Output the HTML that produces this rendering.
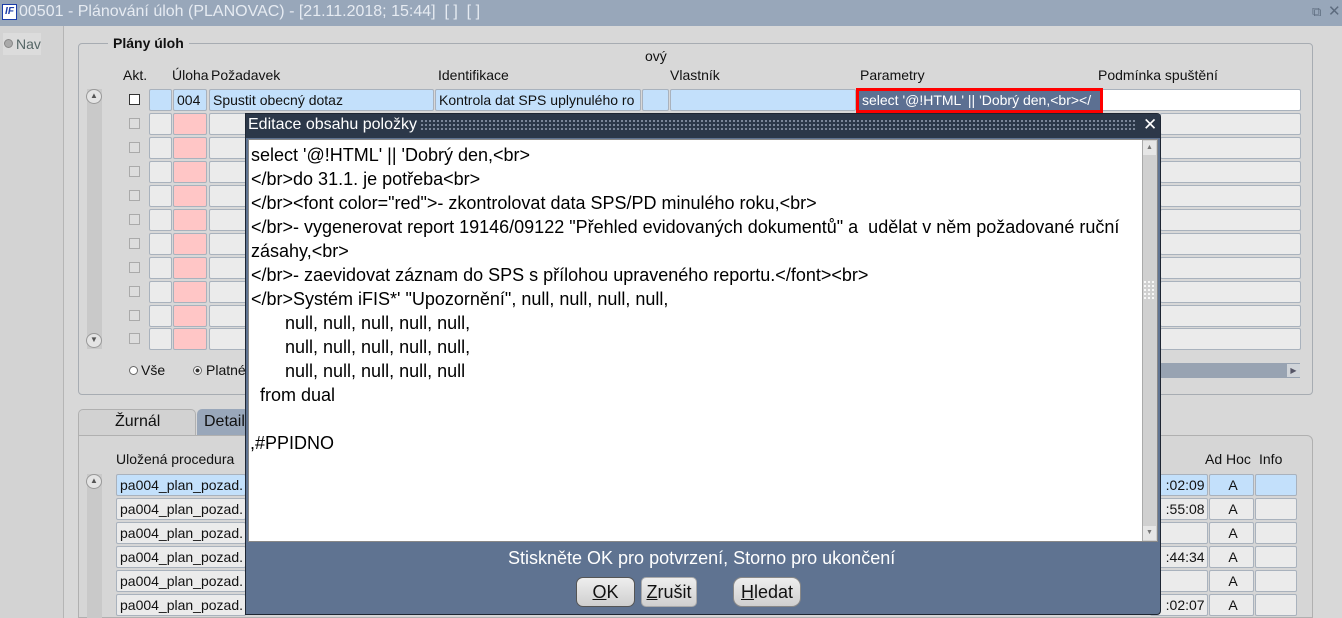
<!DOCTYPE html>
<html><head><meta charset="utf-8">
<style>
*{margin:0;padding:0;box-sizing:border-box}
body{width:1342px;height:618px;overflow:hidden;background:#d8d8d8;font-family:"Liberation Sans",Arial,sans-serif;font-size:14px;color:#111;position:relative}
.a{position:absolute}
.c{position:absolute;height:22px;border:1px solid #a9b2bd;border-radius:2px;background:#ebebeb;font-size:14px;line-height:20px;padding-left:3px;white-space:nowrap;overflow:hidden}
.p{background:#ffc6c6}
.b{background:#c3e0fb}
.cb{position:absolute;width:11px;height:11px;border:1px solid #aaa;background:#ddd}
.t{position:absolute;font-size:14px;white-space:nowrap}
.dl{position:absolute;left:251px;font-size:18px;line-height:20px;white-space:nowrap;color:#000}
.btn{position:absolute;height:30px;border:1px solid #555;border-radius:7px;background:linear-gradient(#eee,#cfcfcf);font-size:18px;line-height:28px;text-align:center}
</style></head><body>
<div class="a" style="left:0;top:0;width:1342px;height:26px;background:#98a7ba"></div>
<div class="a" style="left:2px;top:4px;width:15px;height:16px;background:#fff;border:1px solid #1a3ca8;color:#1a3ca8;font-size:10px;font-weight:bold;font-style:italic;line-height:14px;text-align:center">IF</div>
<div class="t" style="left:19px;top:3px;font-size:16px;color:#e6ebf2">00501 - Plánování úloh (PLANOVAC) - [21.11.2018; 15:44]&nbsp; [ ]&nbsp; [ ]</div>
<div class="t" style="left:1312px;top:4px;font-size:13px;color:#5d6b7e">⧉</div>
<div class="t" style="left:1328px;top:2px;font-size:15px;color:#5d6b7e">✕</div>
<div class="a" style="left:0;top:26px;width:64px;height:592px;background:#d3d3d3;border-right:1px solid #b5b5b5"></div>
<div class="a" style="left:3px;top:33px;width:38px;height:22px;background:#dcdcdc"></div>
<div class="a" style="left:4px;top:39px;width:9px;height:9px;border-radius:50%;background:#aaa;border:1px solid #888"></div>
<div class="t" style="left:16px;top:36px;color:#566">Nav</div>
<div class="a" style="left:78px;top:43px;width:1235px;height:352px;border:1px solid #a7acb2;border-radius:4px"></div>
<div class="t" style="left:108px;top:35px;background:#d8d8d8;padding:0 5px;font-weight:bold">Plány úloh</div>
<div class="t" style="left:645px;top:48px">ový</div>
<div class="t" style="left:123px;top:67px">Akt.</div>
<div class="t" style="left:172px;top:67px">Úloha</div>
<div class="t" style="left:211px;top:67px">Požadavek</div>
<div class="t" style="left:438px;top:67px">Identifikace</div>
<div class="t" style="left:670px;top:67px">Vlastník</div>
<div class="t" style="left:860px;top:67px">Parametry</div>
<div class="t" style="left:1098px;top:67px">Podmínka spuštění</div>
<div class="a" style="left:87px;top:89px;width:15px;height:260px;background:#c9c9c9"></div>
<div class="a" style="left:86px;top:89px;width:16px;height:15px;border:1px solid #999;border-radius:50%;background:#e4e4e4;font-size:8px;text-align:center;line-height:12px;color:#555">▲</div>
<div class="a" style="left:86px;top:333px;width:16px;height:15px;border:1px solid #999;border-radius:50%;background:#e4e4e4;font-size:8px;text-align:center;line-height:12px;color:#555">▼</div>
<div class="cb" style="left:129px;top:94px;background:#fff;border-color:#333"></div>
<div class="c b" style="left:149px;top:89px;width:23px"></div>
<div class="c b" style="left:173px;top:89px;width:34px">004</div>
<div class="c b" style="left:209px;top:89px;width:225px">Spustit obecný dotaz</div>
<div class="c b" style="left:435px;top:89px;width:206px">Kontrola dat SPS uplynulého ro</div>
<div class="c b" style="left:642px;top:89px;width:27px"></div>
<div class="c b" style="left:670px;top:89px;width:186px"></div>
<div class="c" style="left:857px;top:89px;width:444px;background:#fff"></div>
<div class="a" style="left:856px;top:88px;width:247px;height:25px;border:3px solid #f00"></div>
<div class="a" style="left:859px;top:91px;width:241px;height:19px;background:#5c7092;color:#fff;font-size:14px;line-height:19px;padding-left:3px;white-space:nowrap;overflow:hidden">select '@!HTML' || 'Dobrý den,&lt;br&gt;&lt;/</div>
<div class="cb" style="left:129px;top:118px"></div><div class="c" style="left:149px;top:113px;width:23px"></div><div class="c p" style="left:173px;top:113px;width:34px"></div><div class="c" style="left:209px;top:113px;width:225px"></div><div class="c" style="left:1160px;top:113px;width:141px"></div>
<div class="cb" style="left:129px;top:142px"></div><div class="c" style="left:149px;top:137px;width:23px"></div><div class="c p" style="left:173px;top:137px;width:34px"></div><div class="c" style="left:209px;top:137px;width:225px"></div><div class="c" style="left:1160px;top:137px;width:141px"></div>
<div class="cb" style="left:129px;top:166px"></div><div class="c" style="left:149px;top:161px;width:23px"></div><div class="c p" style="left:173px;top:161px;width:34px"></div><div class="c" style="left:209px;top:161px;width:225px"></div><div class="c" style="left:1160px;top:161px;width:141px"></div>
<div class="cb" style="left:129px;top:190px"></div><div class="c" style="left:149px;top:185px;width:23px"></div><div class="c p" style="left:173px;top:185px;width:34px"></div><div class="c" style="left:209px;top:185px;width:225px"></div><div class="c" style="left:1160px;top:185px;width:141px"></div>
<div class="cb" style="left:129px;top:214px"></div><div class="c" style="left:149px;top:209px;width:23px"></div><div class="c p" style="left:173px;top:209px;width:34px"></div><div class="c" style="left:209px;top:209px;width:225px"></div><div class="c" style="left:1160px;top:209px;width:141px"></div>
<div class="cb" style="left:129px;top:238px"></div><div class="c" style="left:149px;top:233px;width:23px"></div><div class="c p" style="left:173px;top:233px;width:34px"></div><div class="c" style="left:209px;top:233px;width:225px"></div><div class="c" style="left:1160px;top:233px;width:141px"></div>
<div class="cb" style="left:129px;top:262px"></div><div class="c" style="left:149px;top:257px;width:23px"></div><div class="c p" style="left:173px;top:257px;width:34px"></div><div class="c" style="left:209px;top:257px;width:225px"></div><div class="c" style="left:1160px;top:257px;width:141px"></div>
<div class="cb" style="left:129px;top:286px"></div><div class="c" style="left:149px;top:281px;width:23px"></div><div class="c p" style="left:173px;top:281px;width:34px"></div><div class="c" style="left:209px;top:281px;width:225px"></div><div class="c" style="left:1160px;top:281px;width:141px"></div>
<div class="cb" style="left:129px;top:310px"></div><div class="c" style="left:149px;top:305px;width:23px"></div><div class="c p" style="left:173px;top:305px;width:34px"></div><div class="c" style="left:209px;top:305px;width:225px"></div><div class="c" style="left:1160px;top:305px;width:141px"></div>
<div class="cb" style="left:129px;top:333px"></div><div class="c" style="left:149px;top:328px;width:23px"></div><div class="c p" style="left:173px;top:328px;width:34px"></div><div class="c" style="left:209px;top:328px;width:225px"></div><div class="c" style="left:1160px;top:328px;width:141px"></div>
<div class="a" style="left:129px;top:366px;width:9px;height:9px;border-radius:50%;border:1px solid #666;background:#fff"></div>
<div class="t" style="left:141px;top:362px">Vše</div>
<div class="a" style="left:193px;top:366px;width:9px;height:9px;border-radius:50%;border:1px solid #666;background:radial-gradient(#333 35%,#fff 45%)"></div>
<div class="t" style="left:206px;top:362px">Platné</div>
<div class="a" style="left:1160px;top:363px;width:140px;height:15px;background:#98a3b2"></div>
<div class="a" style="left:1287px;top:364px;width:13px;height:13px;background:#d0d4d9;font-size:8px;line-height:13px;text-align:center;color:#556">▶</div>
<div class="a" style="left:78px;top:409px;width:118px;height:28px;background:#d2d2d2;border:1px solid #b0b0b0;border-bottom:none;border-radius:5px 5px 0 0"></div>
<div class="t" style="left:115px;top:413px;font-size:16px">Žurnál</div>
<div class="a" style="left:197px;top:409px;width:60px;height:26px;background:#99a7ba;border-radius:5px 5px 0 0"></div>
<div class="t" style="left:204px;top:413px;font-size:16px">Detail</div>
<div class="a" style="left:78px;top:435px;width:1235px;height:183px;background:#d6d6d6;border:1px solid #b0b0b0;border-radius:0 6px 0 0"></div>
<div class="t" style="left:116px;top:451px">Uložená procedura</div>
<div class="t" style="left:1205px;top:451px">Ad Hoc</div>
<div class="t" style="left:1259px;top:451px">Info</div>
<div class="a" style="left:87px;top:474px;width:15px;height:144px;background:#c9c9c9"></div>
<div class="a" style="left:86px;top:474px;width:16px;height:15px;border:1px solid #999;border-radius:50%;background:#e4e4e4;font-size:8px;text-align:center;line-height:12px;color:#555">▲</div>
<div class="c b" style="left:116px;top:474px;width:130px">pa004_plan_pozad.</div><div class="c b" style="left:1150px;top:474px;width:58px">&nbsp;&nbsp;&nbsp;:02:09</div><div class="c b" style="left:1209px;top:474px;width:45px;text-align:center">A</div><div class="c b" style="left:1255px;top:474px;width:42px"></div>
<div class="c" style="left:116px;top:498px;width:130px">pa004_plan_pozad.</div><div class="c" style="left:1150px;top:498px;width:58px">&nbsp;&nbsp;&nbsp;:55:08</div><div class="c" style="left:1209px;top:498px;width:45px;text-align:center">A</div><div class="c" style="left:1255px;top:498px;width:42px"></div>
<div class="c" style="left:116px;top:522px;width:130px">pa004_plan_pozad.</div><div class="c" style="left:1150px;top:522px;width:58px"></div><div class="c" style="left:1209px;top:522px;width:45px;text-align:center">A</div><div class="c" style="left:1255px;top:522px;width:42px"></div>
<div class="c" style="left:116px;top:546px;width:130px">pa004_plan_pozad.</div><div class="c" style="left:1150px;top:546px;width:58px">&nbsp;&nbsp;&nbsp;:44:34</div><div class="c" style="left:1209px;top:546px;width:45px;text-align:center">A</div><div class="c" style="left:1255px;top:546px;width:42px"></div>
<div class="c" style="left:116px;top:570px;width:130px">pa004_plan_pozad.</div><div class="c" style="left:1150px;top:570px;width:58px"></div><div class="c" style="left:1209px;top:570px;width:45px;text-align:center">A</div><div class="c" style="left:1255px;top:570px;width:42px"></div>
<div class="c" style="left:116px;top:594px;width:130px">pa004_plan_pozad.</div><div class="c" style="left:1150px;top:594px;width:58px">&nbsp;&nbsp;&nbsp;:02:07</div><div class="c" style="left:1209px;top:594px;width:45px;text-align:center">A</div><div class="c" style="left:1255px;top:594px;width:42px"></div>
<div class="a" style="left:245px;top:113px;width:916px;height:502px;background:#5f7391;border:1px solid #1e2633;border-radius:0 4px 4px 0"></div>
<div class="a" style="left:246px;top:114px;width:914px;height:24px;background:#2c3849"></div>
<div class="a" style="left:420px;top:119px;width:716px;height:12px;background-image:radial-gradient(#8a96a8 0.8px,transparent 1.2px);background-size:4px 4px"></div>
<div class="t" style="left:248px;top:116px;font-size:16px;color:#fff;background:#2c3849;padding-right:4px">Editace obsahu položky</div>
<div class="t" style="left:1143px;top:115px;font-size:17px;color:#fff">✕</div>
<div class="a" style="left:248px;top:139px;width:910px;height:403px;background:#fff;border:1px solid #888"></div>
<div class="a" style="left:1142px;top:140px;width:15px;height:401px;background:#d0d0d0;border-left:1px solid #aaa"></div>
<div class="a" style="left:1143px;top:141px;width:13px;height:14px;background:#e6e6e6;font-size:7px;text-align:center;line-height:13px;color:#777">▲</div>
<div class="a" style="left:1143px;top:526px;width:13px;height:14px;background:#e6e6e6;font-size:7px;text-align:center;line-height:13px;color:#777">▼</div>
<div class="a" style="left:1143px;top:280px;width:13px;height:20px;background-image:radial-gradient(#fff 0.8px,transparent 1.2px);background-size:4px 4px"></div>
<div class="dl" style="top:145px">select '@!HTML' || 'Dobrý den,&lt;br&gt;</div>
<div class="dl" style="top:169px">&lt;/br&gt;do 31.1. je potřeba&lt;br&gt;</div>
<div class="dl" style="top:193px">&lt;/br&gt;&lt;font color="red"&gt;- zkontrolovat data SPS/PD minulého roku,&lt;br&gt;</div>
<div class="dl" style="top:217px">&lt;/br&gt;- vygenerovat report 19146/09122 "Přehled evidovaných dokumentů" a&nbsp; udělat v něm požadované ruční</div>
<div class="dl" style="top:241px">zásahy,&lt;br&gt;</div>
<div class="dl" style="top:265px">&lt;/br&gt;- zaevidovat záznam do SPS s přílohou upraveného reportu.&lt;/font&gt;&lt;br&gt;</div>
<div class="dl" style="top:289px">&lt;/br&gt;Systém iFIS*' "Upozornění", null, null, null, null,</div>
<div class="dl" style="top:313px;left:285px">null, null, null, null, null,</div>
<div class="dl" style="top:337px;left:285px">null, null, null, null, null,</div>
<div class="dl" style="top:361px;left:285px">null, null, null, null, null</div>
<div class="dl" style="top:385px;left:260px">from dual</div>
<div class="dl" style="top:433px;left:250px">,#PPIDNO</div>
<div class="t" style="left:508px;top:548px;font-size:18px;color:#fff">Stiskněte OK pro potvrzení, Storno pro ukončení</div>
<div class="btn" style="left:576px;top:577px;width:59px"><u>O</u>K</div>
<div class="btn" style="left:641px;top:577px;width:56px;border-color:#aaa;border-radius:5px"><u>Z</u>rušit</div>
<div class="btn" style="left:733px;top:577px;width:68px;border-color:#888;border-radius:9px"><u>H</u>ledat</div>
</body></html>
